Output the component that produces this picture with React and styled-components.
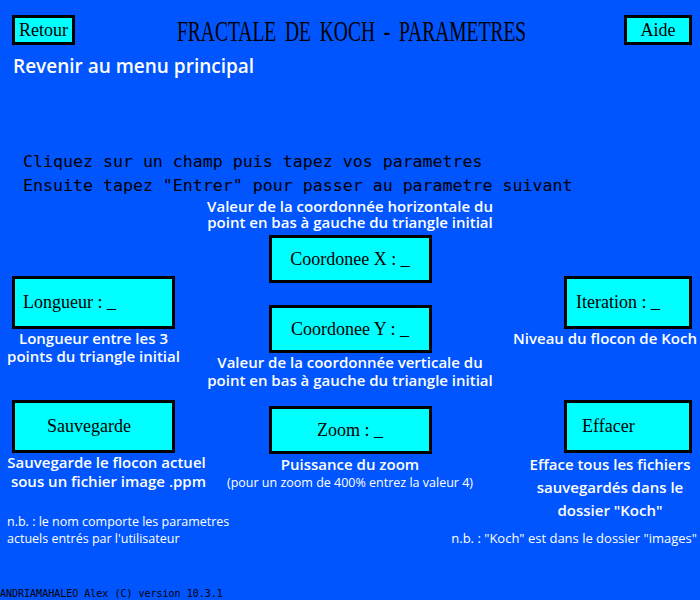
import React from 'react';
import styled, { createGlobalStyle } from 'styled-components';

const GlobalStyle = createGlobalStyle`
  html, body {
    margin: 0;
    padding: 0;
    background: #0055ff;
  }
`;

const fields = {
  x: { label: 'Coordonee X : _' },
  y: { label: 'Coordonee Y : _' },
  zoom: { label: 'Zoom : _' },
};

export default function App() {
  return (
    <>
      <GlobalStyle />
      <Screen>
        <Header>
          <SmallButton>Retour</SmallButton>
          <Title><TitleText>FRACTALE DE KOCH - PARAMETRES</TitleText></Title>
          <SmallButton $right>Aide</SmallButton>
        </Header>
        <Subtitle>Revenir au menu principal</Subtitle>

        <Instructions>
          <InstructionLine>Cliquez sur un champ puis tapez vos parametres</InstructionLine>
          <InstructionLine>Ensuite tapez "Entrer" pour passer au parametre suivant</InstructionLine>
        </Instructions>

        <Board>
          <LeftColumn>
            <Group $width={163} $ml={12} $mt={78}>
              <Field $width={163} $height={53} $pad={8}>Longueur : _</Field>
              <Desc>{'Longueur entre les 3\npoints du triangle initial'}</Desc>
            </Group>
            <Group $width={163} $ml={12} $mt={35}>
              <Field $width={163} $height={53} $pad={32}>Sauvegarde</Field>
              <Desc $shift={26} $lh={19}>{'Sauvegarde le flocon actuel\n sous un fichier image .ppm'}</Desc>
            </Group>
            <Note $ml={7} $mt={22}>{"n.b. : le nom comporte les parametres\nactuels entrés par l'utilisateur"}</Note>
          </LeftColumn>

          <CenterColumn>
            <Desc $lh={16}>{'Valeur de la coordonnée horizontale du\npoint en bas à gauche du triangle initial'}</Desc>
            <Field $width={163} $height={48} $mt={5}>{fields.x.label}</Field>
            <Field $width={163} $height={48} $mt={22}>{fields.y.label}</Field>
            <Desc>{'Valeur de la coordonnée verticale du\npoint en bas à gauche du triangle initial'}</Desc>
            <Field $width={163} $height={48} $mt={17}>{fields.zoom.label}</Field>
            <Desc $lh={20}>Puissance du zoom</Desc>
            <Note>(pour un zoom de 400% entrez la valeur 4)</Note>
          </CenterColumn>

          <RightColumn>
            <Group $width={190} $mt={78}>
              <Field $width={128} $height={53} $pad={9} $end>Iteration : _</Field>
              <Desc>Niveau du flocon de Koch</Desc>
            </Group>
            <Group $width={190} $mt={53}>
              <Field $width={128} $height={53} $pad={15} $end>Effacer</Field>
              <Desc $lh={23} $shift={10}>{'Efface tous les fichiers\nsauvegardés dans le\ndossier "Koch"'}</Desc>
              <RightNote $mt={8}>n.b. : "Koch" est dans le dossier "images"</RightNote>
            </Group>
          </RightColumn>
        </Board>

        <Footer>ANDRIAMAHALEO Alex (C) version 10.3.1</Footer>
      </Screen>
    </>
  );
}

const Screen = styled.div`
  width: 700px;
  height: 600px;
  background: #0055ff;
  display: flex;
  flex-direction: column;
  overflow: hidden;
`;

const Header = styled.header`
  display: grid;
  grid-template-columns: 1fr auto 1fr;
  align-items: center;
  padding: 14px 8px 0 12px;
`;

const SmallButton = styled.div`
  justify-self: ${p => (p.$right ? 'end' : 'start')};
  box-sizing: border-box;
  width: ${p => (p.$right ? '68px' : '63px')};
  height: 30px;
  border: 3px solid #000;
  background: #00ffff;
  display: flex;
  align-items: center;
  justify-content: center;
  font-family: "Liberation Serif", serif;
  font-size: 18px;
  color: #000;
`;

const Title = styled.div`
  width: 348px;
  display: flex;
  justify-content: center;
  margin-top: 2px;
`;

const TitleText = styled.span`
  display: inline-block;
  white-space: nowrap;
  font-family: "Liberation Serif", serif;
  font-size: 30px;
  line-height: 30px;
  word-spacing: 6px;
  color: #000;
  transform: scaleX(0.65);
`;

const Subtitle = styled.div`
  margin: 8px 0 0 13px;
  font-family: "Open Sans", sans-serif;
  font-weight: 600;
  font-size: 19px;
  line-height: 24px;
  color: #fff;
`;

const Instructions = styled.div`
  margin: 72px 0 0 23px;
  display: flex;
  flex-direction: column;
`;

const InstructionLine = styled.div`
  font-family: "DejaVu Sans Mono", monospace;
  font-size: 16.6px;
  line-height: 24px;
  color: #000;
  white-space: pre;
`;

const Board = styled.main`
  display: grid;
  grid-template-columns: 235px minmax(0, 1fr) 235px;
  align-items: start;
`;

const Column = styled.div`
  min-width: 0;
  display: flex;
  flex-direction: column;
`;

const LeftColumn = styled(Column)`
  align-items: flex-start;
`;

const CenterColumn = styled(Column)`
  align-items: center;
`;

const RightColumn = styled(Column)`
  align-items: flex-end;
`;

const Group = styled.div`
  width: ${p => p.$width}px;
  margin-top: ${p => p.$mt || 0}px;
  margin-left: ${p => p.$ml || 0}px;
  display: flex;
  flex-direction: column;
  align-items: center;
`;

const Field = styled.div`
  box-sizing: border-box;
  width: ${p => p.$width}px;
  height: ${p => p.$height}px;
  margin-top: ${p => p.$mt || 0}px;
  margin-right: ${p => (p.$end ? '8px' : '0')};
  align-self: ${p => (p.$end ? 'flex-end' : 'auto')};
  flex-shrink: 0;
  border: 3px solid #000;
  background: #00ffff;
  display: flex;
  align-items: center;
  justify-content: ${p => (p.$pad != null ? 'flex-start' : 'center')};
  padding-left: ${p => (p.$pad != null ? p.$pad : 0)}px;
  font-family: "Liberation Serif", serif;
  font-size: 18px;
  color: #000;
  white-space: pre;
`;

const Desc = styled.div`
  margin-left: ${p => p.$shift || 0}px;
  font-family: "Open Sans", sans-serif;
  font-weight: 600;
  font-size: 15px;
  line-height: ${p => p.$lh || 18}px;
  color: #fff;
  text-align: center;
  white-space: pre;
`;

const Note = styled.div`
  margin-top: ${p => p.$mt || 0}px;
  margin-left: ${p => p.$ml || 0}px;
  font-family: "Open Sans", sans-serif;
  font-size: 12.5px;
  line-height: 17px;
  color: #fff;
  white-space: pre;
`;

const RightNote = styled(Note)`
  align-self: flex-end;
  margin-right: 3px;
  font-size: 13px;
`;

const Footer = styled.footer`
  margin-top: auto;
  font-family: "DejaVu Sans Mono", monospace;
  font-size: 10px;
  line-height: 12px;
  color: #000;
  white-space: pre;
`;
